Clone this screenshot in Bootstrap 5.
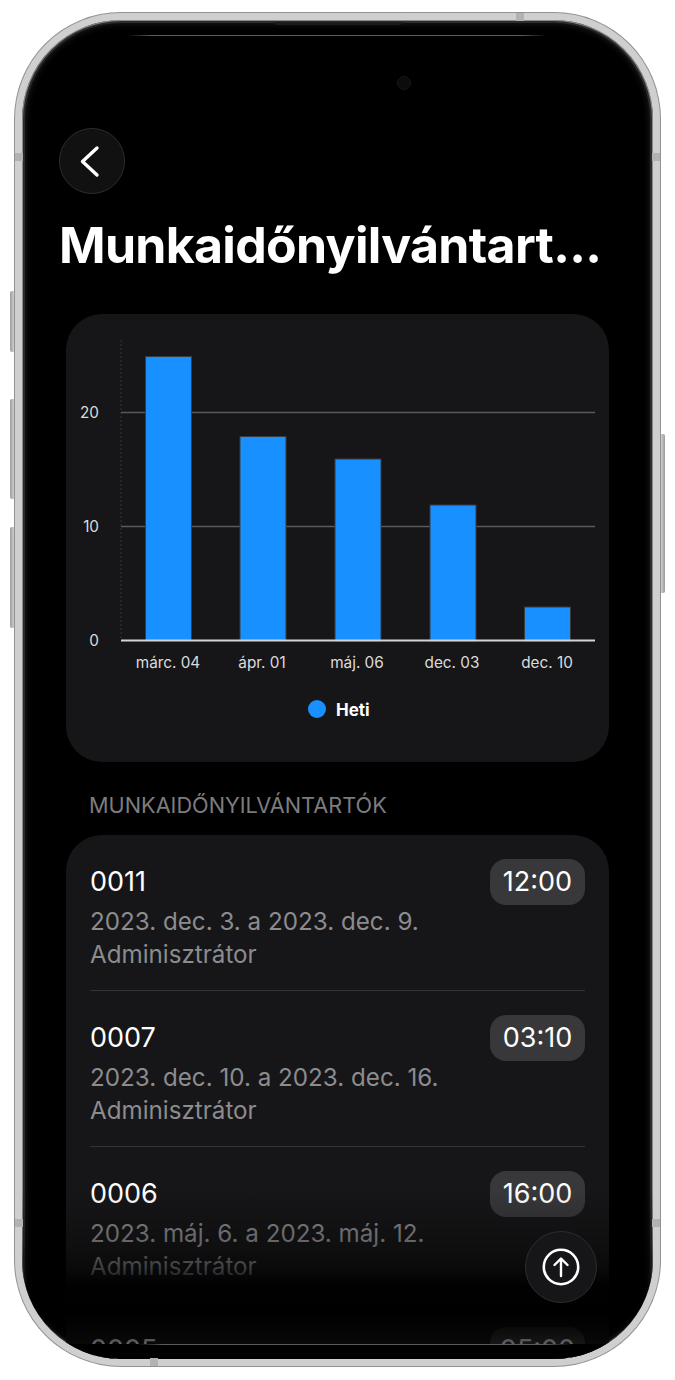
<!DOCTYPE html>
<html lang="hu">
<head>
    <meta charset="UTF-8">
    <meta name="viewport" content="width=device-width, initial-scale=1.0">
    <title>Munkaidőnyilvántartók</title>
    <link href="https://cdn.jsdelivr.net/npm/bootstrap@5.3.0/dist/css/bootstrap.min.css" rel="stylesheet">
    <style>
        html, body {
            height: 1380px;
            overflow: hidden;
        }

        body {
            background: #fff;
            color: #fff;
            font-family: Inter, "Liberation Sans", sans-serif;
            position: relative;
        }

        /* device frame */
        .device-shell {
            position: relative;
            width: 645px;
            height: 1353px;
            margin: 13px 0 0 15px;
            background: #000;
            border: 7px solid #cfcfcf;
            border-radius: 106px;
            box-shadow: 0 0 0 1px #929292, inset 0 0 0 1px #8a8a8a, inset 0 0 0 3px #2c2c2c, inset 0 0 7px 3px #222;
            overflow: hidden;
        }

        .side-key {
            position: absolute;
            width: 5px;
            background: linear-gradient(90deg, #9b9b9b, #dcdcdc);
            border-radius: 2px 0 0 2px;
        }

        .side-key.on-right {
            left: 660px;
            background: linear-gradient(90deg, #dcdcdc, #9b9b9b);
            border-radius: 0 2px 2px 0;
        }

        .key-a { left: 10px; top: 291px; height: 61px; }
        .key-b { left: 10px; top: 399px; height: 100px; }
        .key-c { left: 10px; top: 527px; height: 101px; }
        .key-d { top: 434px; height: 159px; }

        /* antenna bands on the metal edge */
        .edge-band {
            position: absolute;
            background: #b2b2b2;
        }

        .band-h { width: 8px; height: 8px; }
        .band-l1 { left: 15px; top: 153px; }
        .band-r1 { left: 652px; top: 153px; }
        .band-l2 { left: 15px; top: 1219px; }
        .band-r2 { left: 652px; top: 1219px; }
        .band-t { left: 516px; top: 13px; }
        .band-b { left: 150px; top: 1358px; }

        .screen {
            padding: 108px 29px 0 37px;
        }

        .round-btn {
            width: 66px;
            height: 66px;
            background: #111112;
            border: 1px solid #2c2c2e;
            padding: 0;
        }

        .screen-title {
            width: 546px;
            margin: 21px 0 0;
            font-size: 50px;
            line-height: 60px;
            font-weight: 700;
            letter-spacing: -.7px;
            white-space: nowrap;
        }

        .panel-card {
            width: 543px;
            margin-left: 7px;
            background: #161618;
            border: 0;
            border-radius: 36px;
            color: #fff;
        }

        .chart-card {
            height: 448px;
            margin-top: 39px;
        }

        .chart-card text {
            font-family: Inter, "Liberation Sans", sans-serif;
            font-size: 15.3px;
            fill: #dcdcdc;
        }

        .chart-card .legend-label {
            font-size: 17px;
            font-weight: 700;
            fill: #fff;
        }

        .group-label {
            margin: 30px 0 17px 30px;
            font-size: 21.7px;
            line-height: 26px;
            color: #7c7c7f;
        }

        .record-list {
            --bs-list-group-bg: transparent;
            --bs-list-group-color: #fff;
            --bs-list-group-border-color: #333336;
            padding: 0 24px;
        }

        .record-item {
            padding: 24px 0 19px;
        }

        .record-code {
            font-size: 27px;
            line-height: 46px;
        }

        .record-sub {
            font-size: 24.2px;
            line-height: 33px;
            color: #8c8c8f;
        }

        .time-pill {
            width: 95px;
            height: 46px;
            background: #38383b;
            border-radius: 16px;
            font-size: 27px;
            line-height: 46px;
        }

        .bottom-fade {
            position: absolute;
            left: 0;
            right: 0;
            top: 1170px;
            height: 155px;
            background: linear-gradient(180deg, rgba(0,0,0,0) 0%, rgba(0,0,0,.3) 35%, rgba(0,0,0,.55) 50%, rgba(0,0,0,.95) 62%, #000 80%, rgba(0,0,0,.6) 100%);
        }

        .bottom-strip {
            position: absolute;
            left: 0;
            right: 0;
            top: 1324px;
            bottom: 0;
            background: #000;
        }

        .glass-line {
            position: absolute;
            height: 1px;
            background: linear-gradient(90deg, transparent, #5c5c5c 6%, #5c5c5c 94%, transparent);
        }

        .line-top { left: 105px; width: 420px; top: 15px; }
        .line-bottom { left: 115px; width: 435px; top: 1324px; }

        .notch-edge {
            position: absolute;
            left: 252px;
            top: 2px;
            width: 128px;
            height: 3px;
            background: #1c1c1c;
            border-radius: 0 0 4px 4px;
        }

        .front-camera {
            position: absolute;
            left: 375px;
            top: 56px;
            width: 14px;
            height: 14px;
            border-radius: 50%;
            background: #0c0c0c;
            border: 1px solid #161616;
        }

        .top-btn {
            position: absolute;
            left: 503px;
            top: 1211px;
            width: 72px;
            height: 72px;
            background: #161618;
            border-color: #2e2e30;
        }
    </style>
</head>
<body>

<span class="side-key key-a"></span>
<span class="side-key key-b"></span>
<span class="side-key key-c"></span>
<span class="side-key on-right key-d"></span>

<div class="device-shell">
    <div class="screen">
        <button type="button" class="btn round-btn rounded-circle d-flex align-items-center justify-content-center" aria-label="Vissza">
            <svg width="26" height="34" viewBox="0 0 26 34" fill="none" stroke="#fff" stroke-width="3.4" stroke-linecap="round" stroke-linejoin="round"><path d="M18 4 3.500 17.500 18 31"/></svg>
        </button>

        <h1 class="screen-title">Munkaidőnyilvántart...</h1>

        <div class="card panel-card chart-card">
            <svg width="543" height="448" viewBox="0 0 543 448">
                <line x1="55" y1="26" x2="55" y2="326" stroke="#333" stroke-dasharray="2 2"/>
                <line x1="55" y1="98.500" x2="529" y2="98.500" stroke="#5a5a5c" stroke-width="1.5"/>
                <line x1="55" y1="212.500" x2="529" y2="212.500" stroke="#5a5a5c" stroke-width="1.5"/>
                <g fill="#1890ff" stroke="#3a3a3c">
                    <rect x="79.500" y="42.500" width="46" height="284"/>
                    <rect x="174" y="122.500" width="46" height="204"/>
                    <rect x="269" y="145" width="46" height="182"/>
                    <rect x="364" y="191" width="46" height="136"/>
                    <rect x="458.500" y="293" width="46" height="34"/>
                </g>
                <line x1="55" y1="326.500" x2="529" y2="326.500" stroke="#d4d4d4" stroke-width="2"/>
                <text x="33" y="104" text-anchor="end">20</text>
                <text x="33" y="218" text-anchor="end">10</text>
                <text x="33" y="332" text-anchor="end">0</text>
                <text x="102" y="354" text-anchor="middle">márc. 04</text>
                <text x="196" y="354" text-anchor="middle">ápr. 01</text>
                <text x="291" y="354" text-anchor="middle">máj. 06</text>
                <text x="386" y="354" text-anchor="middle">dec. 03</text>
                <text x="481" y="354" text-anchor="middle">dec. 10</text>
                <circle cx="251" cy="395" r="9" fill="#1890ff"/>
                <text class="legend-label" x="270" y="402">Heti</text>
            </svg>
        </div>

        <div class="group-label">MUNKAIDŐNYILVÁNTARTÓK</div>

        <div class="card panel-card">
            <div class="list-group list-group-flush record-list" id="records"></div>
        </div>
    </div>

    <div class="bottom-fade"></div>
    <div class="bottom-strip"></div>
    <div class="glass-line line-top"></div>
    <div class="glass-line line-bottom"></div>
    <div class="notch-edge"></div>
    <div class="front-camera"></div>

    <button type="button" class="btn round-btn top-btn rounded-circle d-flex align-items-center justify-content-center" aria-label="Fel">
        <svg width="38" height="38" viewBox="0 0 38 38" fill="none" stroke="#fff" stroke-linecap="round" stroke-linejoin="round"><circle cx="19" cy="19" r="17.2" stroke-width="2.6"/><path d="M19 28V11M12.500 17 19 10.500 25.500 17" stroke-width="2.4"/></svg>
    </button>
</div>

<span class="edge-band band-h band-l1"></span>
<span class="edge-band band-h band-r1"></span>
<span class="edge-band band-h band-l2"></span>
<span class="edge-band band-h band-r2"></span>
<span class="edge-band band-h band-t"></span>
<span class="edge-band band-h band-b"></span>

<script src="https://cdn.jsdelivr.net/npm/bootstrap@5.3.0/dist/js/bootstrap.bundle.min.js"></script>
<script>
    // last row only peeks out above the bottom edge, so it has no sub lines
    const records = [
        ['0011', '2023. dec. 3. a 2023. dec. 9.', '12:00'],
        ['0007', '2023. dec. 10. a 2023. dec. 16.', '03:10'],
        ['0006', '2023. máj. 6. a 2023. máj. 12.', '16:00'],
        ['0005', '', '05:00']
    ];

    document.getElementById('records').innerHTML = records.map(r => `
        <div class="list-group-item record-item d-flex justify-content-between align-items-start">
            <div>
                <div class="record-code">${r[0]}</div>
                ${r[1] ? `<div class="record-sub">${r[1]}</div><div class="record-sub">Adminisztrátor</div>` : ''}
            </div>
            <div class="time-pill text-center">${r[2]}</div>
        </div>`).join('');
</script>

</body>
</html>
